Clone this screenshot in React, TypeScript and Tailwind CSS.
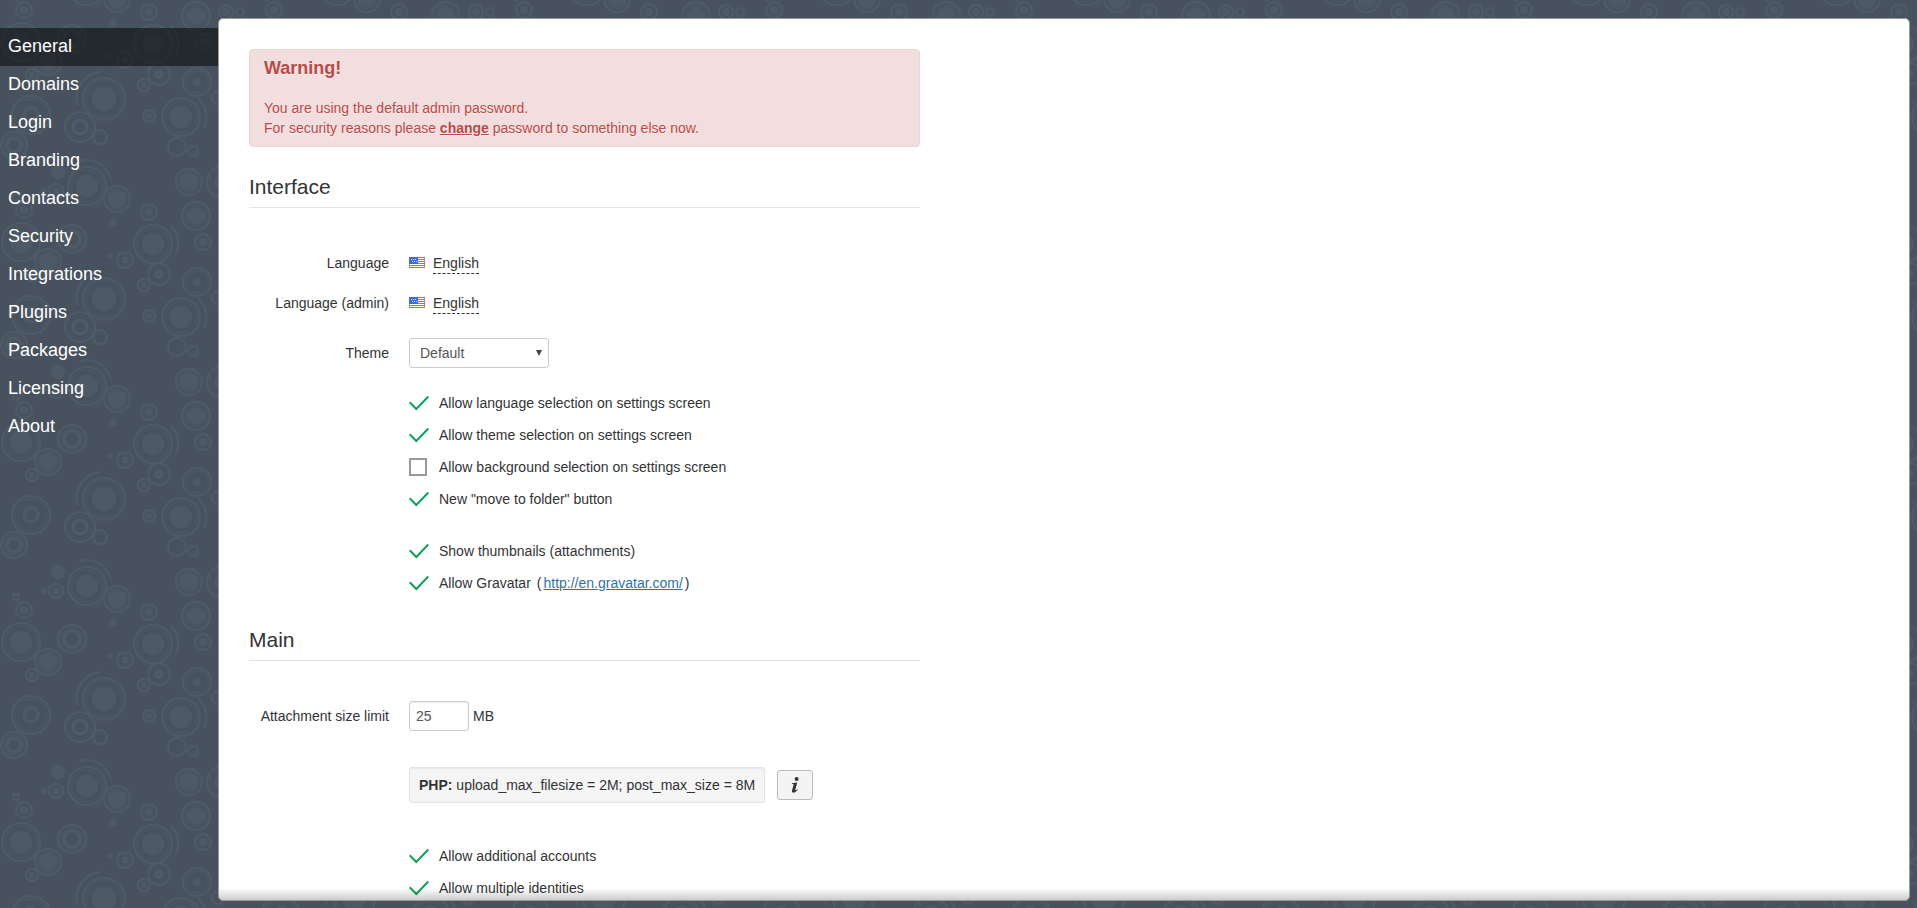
import { useState, type ReactNode } from 'react';

type Ring = { x: number; y: number; r: number; core?: number; hole?: boolean; arc?: 'left' | 'right' | 'top' };

const TILE_W = 250;
const TILE_H = 200;

const rings: Ring[] = [
  { x: 104, y: 99, r: 22, core: 12, arc: 'left' },
  { x: 31, y: 115, r: 20, core: 9, hole: true },
  { x: 80, y: 127, r: 16, core: 9, hole: true },
  { x: 100, y: 137, r: 8 },
  { x: 14, y: 145, r: 14, core: 9, hole: true },
  { x: 149, y: 116, r: 7, core: 3 },
  { x: 181, y: 117, r: 20, core: 11, arc: 'right' },
  { x: 177, y: 147, r: 10 },
  { x: 193, y: 151, r: 6 },
  { x: 197, y: 82, r: 15, core: 4 },
  { x: 144, y: 85, r: 7, core: 3 },
  { x: 159, y: 74, r: 12, core: 5, hole: true },
  { x: 58, y: 172, r: 7, core: 5 },
  { x: 56, y: 191, r: 8, core: 4, hole: true },
  { x: 44, y: 191, r: 0, core: 3 },
  { x: 87, y: 186, r: 20, core: 11, arc: 'top' },
  { x: 117, y: 199, r: 14, core: 9 },
  { x: 189, y: 182, r: 14, core: 9 },
  { x: 223, y: 182, r: 17, core: 9 },
  { x: 16, y: 197, r: 4 },
  { x: 24, y: 10, r: 9, core: 4 },
  { x: 196, y: 16, r: 15, core: 9 },
  { x: 149, y: 12, r: 9, core: 4 },
  { x: 113, y: 23, r: 0, core: 4 },
  { x: 21, y: 42, r: 20, core: 11 },
  { x: 72, y: 39, r: 15, core: 10, hole: true },
  { x: 153, y: 44, r: 20, core: 11, arc: 'right' },
  { x: 203, y: 42, r: 9, core: 4 },
  { x: 125, y: 60, r: 9, core: 4, hole: true },
  { x: 110, y: 56, r: 0, core: 3 },
  { x: 48, y: 62, r: 14, core: 9 },
  { x: 32, y: 75, r: 7, core: 3 },
  { x: 218, y: 98, r: 7 },
  { x: 226, y: 12, r: 8, core: 4 },
  { x: 240, y: 12, r: 5 },
];

const arcs = {
  left: 'M-27 6A27 27 0 0 1 -4 -27',
  right: 'M18 -18A25 25 0 0 1 23 10',
  top: 'M-7 -25A25 25 0 0 1 24 -6',
};

function Backdrop() {
  return (
    <svg className="absolute inset-0 size-full" aria-hidden="true">
      <defs>
        <pattern id="rings" width={TILE_W} height={TILE_H} patternUnits="userSpaceOnUse">
          {[-TILE_H, 0, TILE_H].map((dy) => (
            <g key={dy} transform={`translate(0 ${dy})`} fill="none" stroke="#4e5b67" strokeWidth="2">
              {rings.map((c, i) => (
                <g key={i} transform={`translate(${c.x} ${c.y})`}>
                  {c.r > 0 && <circle r={c.r - 1} />}
                  {c.r > 13 && <circle r={c.r - 4} strokeWidth="1" opacity="0.5" />}
                  {c.core && c.hole && <circle r={c.core - 2} strokeWidth="3" />}
                  {c.core && !c.hole && <circle r={c.core} fill="#4d5965" stroke="none" />}
                  {c.arc && <path d={arcs[c.arc]} />}
                </g>
              ))}
            </g>
          ))}
        </pattern>
      </defs>
      <rect width="100%" height="100%" fill="url(#rings)" />
    </svg>
  );
}

const navItems = [
  'General', 'Domains', 'Login', 'Branding', 'Contacts', 'Security',
  'Integrations', 'Plugins', 'Packages', 'Licensing', 'About',
];

function Sidebar() {
  return (
    <nav className="w-[218px] shrink-0 pt-7">
      <ul>
        {navItems.map((item, i) => (
          <li key={item}>
            <a
              href={`#/${item.toLowerCase()}`}
              className={`block h-[38px] pl-2 text-lg leading-9 text-white ${i === 0 ? 'bg-black/50' : 'hover:bg-black/30'}`}
            >
              {item}
            </a>
          </li>
        ))}
      </ul>
    </nav>
  );
}

function Flag() {
  return (
    <svg width="16" height="11" viewBox="0 0 16 11" shapeRendering="crispEdges" aria-hidden="true">
      <rect width="16" height="11" fill="#fff" />
      <path d="M8 .5h8M8 2.5h8M8 4.5h8M0 6.5h16M0 8.5h16M0 10.5h16" stroke="#ee5a45" />
      <path d="M15.5 0v11M.5 7v4" stroke="#c8624f" opacity="0.7" />
      <rect width="9" height="7" fill="#3a6fe0" />
      <path d="M0 .5h9M.5 0v7" stroke="#5b62b8" />
      <path d="M2 2.5h1M4 2.5h1M6 2.5h1M3 4.5h1M5 4.5h1M7 4.5h1" stroke="#fff" opacity="0.8" />
    </svg>
  );
}

function Legend({ children }: { children: ReactNode }) {
  return <h2 className="border-b border-[#e5e5e5] text-[21px] leading-10 text-[#333]">{children}</h2>;
}

function Row({ label, htmlFor, children }: { label?: string; htmlFor?: string; children: ReactNode }) {
  return (
    <div className="flex">
      <div className="w-[140px] shrink-0 pt-[5px] text-right">
        {label && <label htmlFor={htmlFor}>{label}</label>}
      </div>
      <div className="ml-5 min-w-0 flex-1">{children}</div>
    </div>
  );
}

function LanguageRow({ id, label }: { id: string; label: string }) {
  return (
    <Row label={label} htmlFor={id}>
      <div className="flex gap-2 pt-[5px]">
        <span className="pt-1">
          <Flag />
        </span>
        <button id={id} type="button" className="cursor-pointer border-b border-dashed border-[#333] leading-5">
          English
        </button>
      </div>
    </Row>
  );
}

function Check({ id, label, initial = true, children }: { id: string; label: string; initial?: boolean; children?: ReactNode }) {
  const [on, setOn] = useState(initial);
  return (
    <div className="flex h-8 items-center">
      <span className="grid w-[30px] items-center">
        <input
          id={id}
          type="checkbox"
          checked={on}
          onChange={() => setOn(!on)}
          className="peer col-start-1 row-start-1 size-[18px] appearance-none border-2 border-[#999] checked:border-transparent"
        />
        <svg
          className="pointer-events-none invisible col-start-1 row-start-1 peer-checked:visible"
          width="20" height="16" viewBox="0 0 20 16" fill="none" stroke="#12a05c" strokeWidth="2" aria-hidden="true"
        >
          <path d="M.7 7.3L7.3 14L19.3 1.5" />
        </svg>
      </span>
      <label htmlFor={id}>{label}</label>
      {children}
    </div>
  );
}

export default function App() {
  return (
    <div className="relative h-screen overflow-hidden bg-[#48525e] font-['Liberation_Sans',Arial,sans-serif] text-sm leading-5 text-[#333]">
      <Backdrop />
      <div className="relative flex h-full">
        <Sidebar />
        <main className="relative mt-[18px] mr-[7px] mb-[7px] min-w-0 flex-1 overflow-hidden rounded-[5px] border border-[#999] bg-white">
          <div className="h-full overflow-y-auto px-[30px] pt-[30px] [scrollbar-width:none]">
            <div className="max-w-[671px]">
              <section
                role="alert"
                className="rounded border border-[#eed3d7] bg-[#f2dede] px-3.5 pt-2 pb-2 text-[#b94a48] [text-shadow:0_1px_0_rgba(255,255,255,0.5)]"
              >
                <h4 className="text-lg leading-5 font-bold">Warning!</h4>
                <p className="pt-5">
                  You are using the default admin password.
                  <br />
                  For security reasons please{' '}
                  <a href="#/security" className="font-bold underline">change</a>{' '}
                  password to something else now.
                </p>
              </section>

              <section className="pt-5">
                <Legend>Interface</Legend>
                <div className="flex flex-col gap-3.5 pt-10">
                  <LanguageRow id="language" label="Language" />
                  <LanguageRow id="language-admin" label="Language (admin)" />
                </div>
                <div className="pt-6">
                  <Row label="Theme" htmlFor="theme">
                    <div className="relative w-[140px]">
                      <select
                        id="theme"
                        className="h-[30px] w-full appearance-none rounded-[3px] border border-[#ccc] bg-white pl-2.5 text-[#555]"
                      >
                        <option>Default</option>
                      </select>
                      <svg className="pointer-events-none absolute top-3 right-[7px]" width="6" height="6" viewBox="0 0 6 6" aria-hidden="true">
                        <path d="M0 0H6L3 6Z" fill="#444" />
                      </svg>
                    </div>
                  </Row>
                </div>
                <div className="pt-[19px]">
                  <Row>
                    <Check id="allow-language" label="Allow language selection on settings screen" />
                    <Check id="allow-theme" label="Allow theme selection on settings screen" />
                    <Check id="allow-background" label="Allow background selection on settings screen" initial={false} />
                    <Check id="move-to-folder" label={'New "move to folder" button'} />
                    <div className="pt-5">
                      <Check id="thumbnails" label="Show thumbnails (attachments)" />
                      <Check id="gravatar" label="Allow Gravatar">
                        <span className="flex gap-0.5 pl-1.5">
                          (
                          <a href="http://en.gravatar.com/" className="text-[#3071a9] underline">http://en.gravatar.com/</a>
                          )
                        </span>
                      </Check>
                    </div>
                  </Row>
                </div>
              </section>

              <section className="pt-[21px]">
                <Legend>Main</Legend>
                <div className="pt-10">
                  <Row label="Attachment size limit" htmlFor="size-limit">
                    <div className="flex items-center gap-1">
                      <input
                        id="size-limit"
                        type="text"
                        defaultValue="25"
                        className="h-[30px] w-[60px] rounded-[3px] border border-[#ccc] px-1.5 text-[#555] shadow-[inset_0_1px_1px_rgba(0,0,0,0.075)]"
                      />
                      <span>MB</span>
                    </div>
                  </Row>
                </div>
                <div className="pt-9">
                  <Row>
                    <div className="flex items-center gap-3">
                      <div className="rounded-[3px] border border-[#e3e3e3] bg-[#f5f5f5] px-[9px] py-[7px] shadow-[inset_0_1px_1px_rgba(0,0,0,0.05)]">
                        <b>PHP:</b> upload_max_filesize = 2M; post_max_size = 8M
                      </div>
                      <button
                        type="button"
                        aria-label="PHP information"
                        className="flex h-[30px] w-9 items-center justify-center rounded-[3px] border border-[#bbb] bg-[#f4f4f4]"
                      >
                        <svg width="8" height="16" viewBox="0 0 8 16" fill="#333" aria-hidden="true">
                          <circle cx="5.6" cy="2" r="2" />
                          <path d="M1 6.2L6.3 5.4L4.3 12.6Q4.2 13.6 5 13.2L6.3 12.2L6.8 12.8Q4.6 15.8 2.2 15.7Q.5 15.4 1 13.4L2.6 7.8Q2.7 7.1 1.9 7.1H.8Z" />
                        </svg>
                      </button>
                    </div>
                  </Row>
                </div>
                <div className="pt-[37px]">
                  <Row>
                    <Check id="additional-accounts" label="Allow additional accounts" />
                    <Check id="multiple-identities" label="Allow multiple identities" />
                  </Row>
                </div>
              </section>
            </div>
          </div>
          <div className="pointer-events-none absolute inset-x-0 bottom-0 h-3 bg-linear-to-b from-transparent to-black/20" />
        </main>
      </div>
    </div>
  );
}
